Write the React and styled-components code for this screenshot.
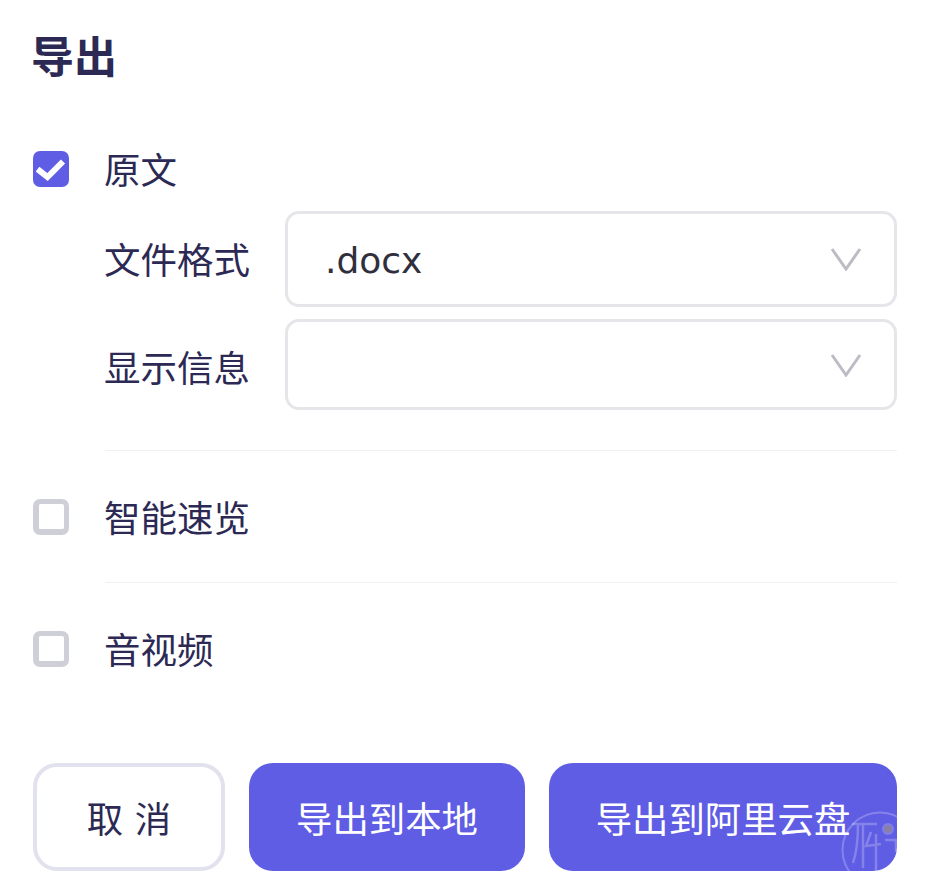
import React from 'react';
import styled, {createGlobalStyle} from "styled-components";

const GlobalStyle = createGlobalStyle`
html, body {
    margin: 0;
    padding: 0;
    background: #fff;
}
`;

const FONT = `"DejaVu Sans", "Noto Sans CJK SC", sans-serif`;
const MARK = "rgba(255,255,255,0.24)";

const Page = styled.div`
position: relative;
width: 925px;
height: 895px;
overflow: hidden;
box-sizing: border-box;
padding: 30px 28px 0 33px;
font-family: ${FONT};
color: #2c2a54;
`;

const Title = styled.h1`
margin: 0 0 65px -2px;
height: 56px;
line-height: 56px;
font-size: 43px;
font-weight: 700;
`;

const OptionRow = styled.div`
display: flex;
align-items: center;
gap: 36px;
height: 36px;
`;

const CheckBox = styled.span`
display: flex;
align-items: center;
justify-content: center;
box-sizing: border-box;
width: 36px;
height: 36px;
border-radius: 7px;
background: ${props => props.checked ? "#5f5de4" : "#fff"};
border-style: solid;
border-color: #cfcfd8;
border-width: ${props => props.checked ? "0" : "5px 5px 6px 6px"};
`;

const Label = styled.span`
font-size: 36.5px;
line-height: 36px;
white-space: nowrap;
margin-left: -1px;
padding-top: ${props => props.shift || 0}px;
`;

const Fields = styled.div`
display: flex;
flex-direction: column;
gap: 12px;
margin: 24px 0 0 72px;
`;

const FieldRow = styled.div`
display: flex;
align-items: center;
gap: 35px;
`;

const Select = styled.div`
flex: 1;
display: flex;
align-items: center;
justify-content: space-between;
box-sizing: border-box;
height: ${props => props.h}px;
padding: 2px 32px 0 37px;
border: 3px solid #e6e6ea;
border-radius: 14px;
font-size: 36px;
color: #30303c;
`;

const Chevron = styled.svg`
width: 32px;
height: 24px;
margin-top: -2px;
`;

const Divider = styled.div`
height: 1px;
margin-left: 72px;
background: #f1f1f4;
margin-top: ${props => props.top}px;
margin-bottom: 48px;
`;

const Footer = styled.div`
display: flex;
gap: 24px;
margin-top: 96px;
`;

const Button = styled.div`
display: flex;
align-items: center;
justify-content: center;
box-sizing: border-box;
width: ${props => props.w}px;
height: 108px;
border-radius: 24px;
font-size: 36.4px;
white-space: nowrap;
background: ${props => props.primary ? "#5f5de4" : "#fff"};
color: ${props => props.primary ? "#fff" : "#2c2a54"};
border: ${props => props.primary ? "0" : "4px solid #e2e1ee"};
`;

const Watermark = styled.svg`
position: absolute;
left: 840px;
top: 810px;
width: 80px;
height: 80px;
pointer-events: none;
`;

const CheckMark = () => (
    <svg width="30" height="24" viewBox="0 0 30 24" fill="none">
        <path d="M1.5 12 L11.5 20 L27 4.5" stroke="#fff" strokeWidth="6"/>
    </svg>
);

const SelectArrow = () => (
    <Chevron viewBox="0 0 32 24" fill="none">
        <path d="M2 2 L16 22 L30 2" stroke="#bcbcc6" strokeWidth="3"/>
    </Chevron>
);

class App extends React.Component {
    render() {
        return (
            <Page>
                <GlobalStyle/>
                <Title>导出</Title>

                <OptionRow>
                    <CheckBox checked><CheckMark/></CheckBox>
                    <Label shift={6}>原文</Label>
                </OptionRow>
                <Fields>
                    <FieldRow>
                        <Label shift={6}>文件格式</Label>
                        <Select h={96}>.docx<SelectArrow/></Select>
                    </FieldRow>
                    <FieldRow>
                        <Label shift={10}>显示信息</Label>
                        <Select h={91}><span/><SelectArrow/></Select>
                    </FieldRow>
                </Fields>
                <Divider top={40}/>

                <OptionRow>
                    <CheckBox/>
                    <Label shift={6}>智能速览</Label>
                </OptionRow>
                <Divider top={47}/>

                <OptionRow>
                    <CheckBox/>
                    <Label shift={6}>音视频</Label>
                </OptionRow>

                <Footer>
                    <Button w={192}>取 消</Button>
                    <Button primary w={276}>导出到本地</Button>
                    <Button primary w={348}>导出到阿里云盘</Button>
                </Footer>

                <Watermark viewBox="0 0 80 80" fill="none">
                    <circle cx="40" cy="40" r="37.5" stroke={MARK} strokeWidth="2"/>
                    <path d="M12 14 H37 M18 15 C18 32 16 44 13 53 M23 15 V58 M31 22 L26 36 L41 34 M36 24 V66 M45 30 H56 V42" stroke={MARK} strokeWidth="2.5"/>
                    <circle cx="48" cy="19" r="6" fill="rgba(255,255,255,0.2)"/>
                    <circle cx="48" cy="19" r="4" fill="#8a80a8"/>
                </Watermark>
            </Page>
        )
    }
}

export default App;
